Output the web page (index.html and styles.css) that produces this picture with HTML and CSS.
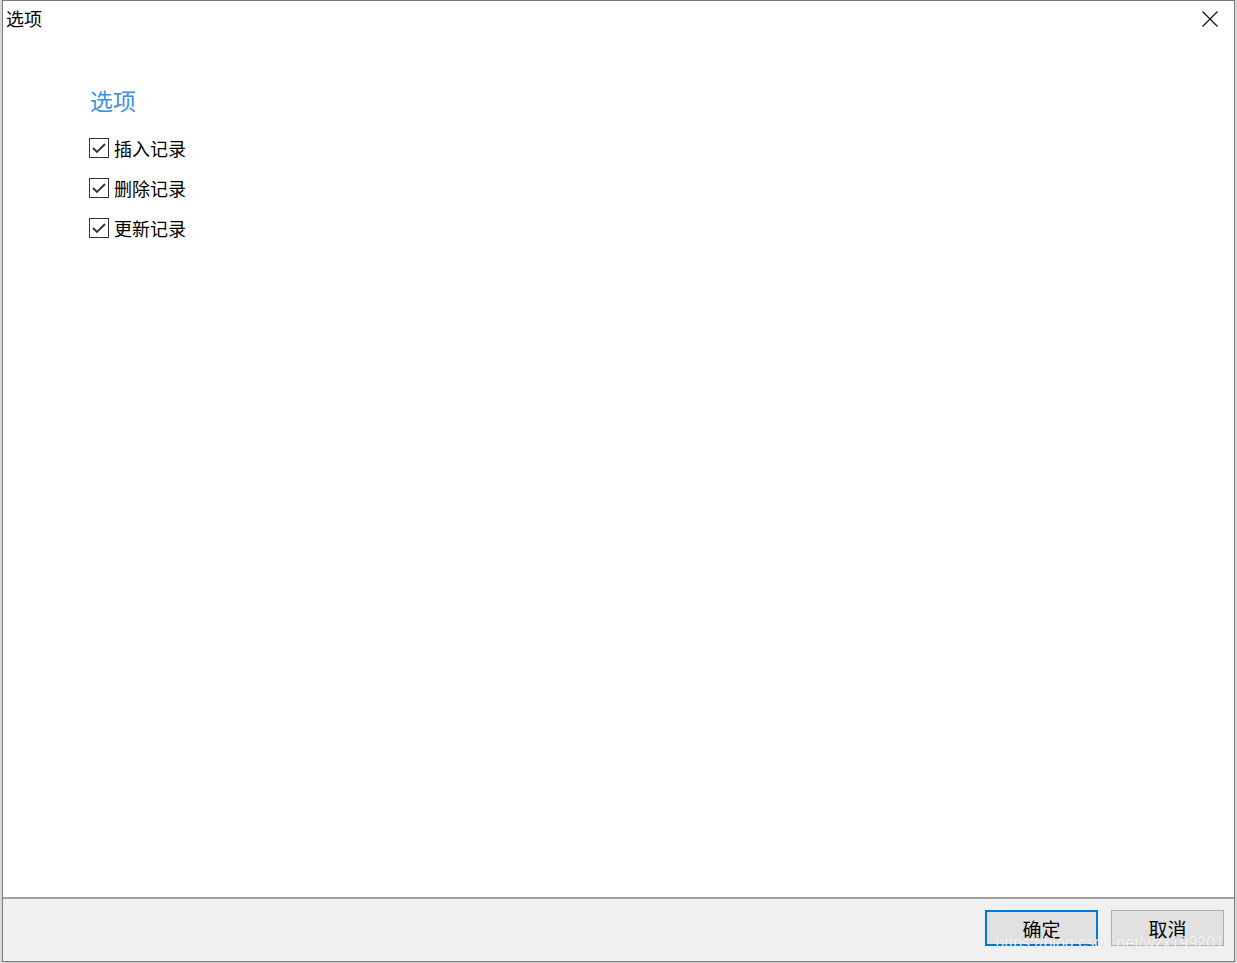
FILE: index.html
```html
<!DOCTYPE html>
<html lang="zh-CN">
<head>
<meta charset="utf-8">
<title>选项</title>
<link rel="stylesheet" href="styles.css">
</head>
<body>
<div class="dialog">
  <div class="titlebar">
    <span class="title">选项</span>
    <span class="close">
      <svg width="16" height="16" viewBox="0 0 16 16"><path d="M0.5 0.5 L15.5 15.5 M15.5 0.5 L0.5 15.5" stroke="#111" stroke-width="1.2" fill="none"/></svg>
    </span>
  </div>
  <div class="content">
    <div class="heading">选项</div>
    <label class="row"><span class="box"><svg width="18" height="18" viewBox="0 0 18 18"><path d="M3 9 L7 13 L15 5" stroke="#333" stroke-width="1.8" fill="none"/></svg></span><span class="label">插入记录</span></label>
    <label class="row"><span class="box"><svg width="18" height="18" viewBox="0 0 18 18"><path d="M3 9 L7 13 L15 5" stroke="#333" stroke-width="1.8" fill="none"/></svg></span><span class="label">删除记录</span></label>
    <label class="row"><span class="box"><svg width="18" height="18" viewBox="0 0 18 18"><path d="M3 9 L7 13 L15 5" stroke="#333" stroke-width="1.8" fill="none"/></svg></span><span class="label">更新记录</span></label>
  </div>
  <div class="footer">
    <button class="btn primary">确定</button>
    <button class="btn">取消</button>
    <span class="watermark">https://blog.csdn.net/wzx199201</span>
  </div>
</div>
</body>
</html>
```
FILE: styles.css
```css
html, body {
  margin: 0;
  padding: 0;
  background: #d8d8d8;
  font-family: "Noto Sans CJK SC", "Noto Sans", sans-serif;
}
.dialog {
  margin-left: 2px;
  width: 1233px;
  height: 962px;
  box-sizing: border-box;
  border: 1px solid #7a7a7a;
  background: #fff;
  display: flex;
  flex-direction: column;
}
.titlebar {
  height: 36px;
  display: flex;
  justify-content: space-between;
  align-items: flex-start;
  padding-left: 3px;
  padding-right: 16px;
}
.title {
  font-size: 18px;
  line-height: 20px;
  margin-top: 7px;
  color: #000;
}
.close {
  margin-top: 10px;
  width: 16px;
  height: 16px;
  display: flex;
}
.content {
  flex: 1;
  padding-left: 86px;
  display: flex;
  flex-direction: column;
}
.heading {
  color: #3d8fe2;
  font-size: 23px;
  line-height: 28px;
  margin-top: 49px;
  margin-left: 1px;
  margin-bottom: 14px;
}
.row {
  display: flex;
  align-items: center;
  height: 40px;
}
.box {
  width: 18px;
  height: 18px;
  border: 1px solid #333;
  display: flex;
  background: #fff;
}
.label {
  margin-left: 5px;
  font-size: 18px;
  color: #000;
}
.footer {
  position: relative;
  height: 64px;
  border-top: 2px solid #a0a0a0;
  background: #f0f0f0;
  display: flex;
  justify-content: flex-end;
  align-items: flex-start;
  gap: 13px;
  padding-top: 11px;
  padding-right: 10px;
  box-sizing: border-box;
}
.btn {
  width: 113px;
  height: 36px;
  box-sizing: border-box;
  border: 1px solid #adadad;
  background: #e1e1e1;
  font-family: "Noto Sans CJK SC", sans-serif;
  font-size: 19px;
  color: #000;
  padding: 0;
}
.btn.primary {
  border: 2px solid #0078d7;
}
.watermark {
  position: absolute;
  right: 10px;
  bottom: 9px;
  font-family: "Liberation Sans", Arial, sans-serif;
  font-size: 16px;
  line-height: 18px;
  color: rgba(255, 255, 255, 0.85);
  text-shadow: 0 0 1px rgba(0,0,0,0.15);
  pointer-events: none;
}
```
